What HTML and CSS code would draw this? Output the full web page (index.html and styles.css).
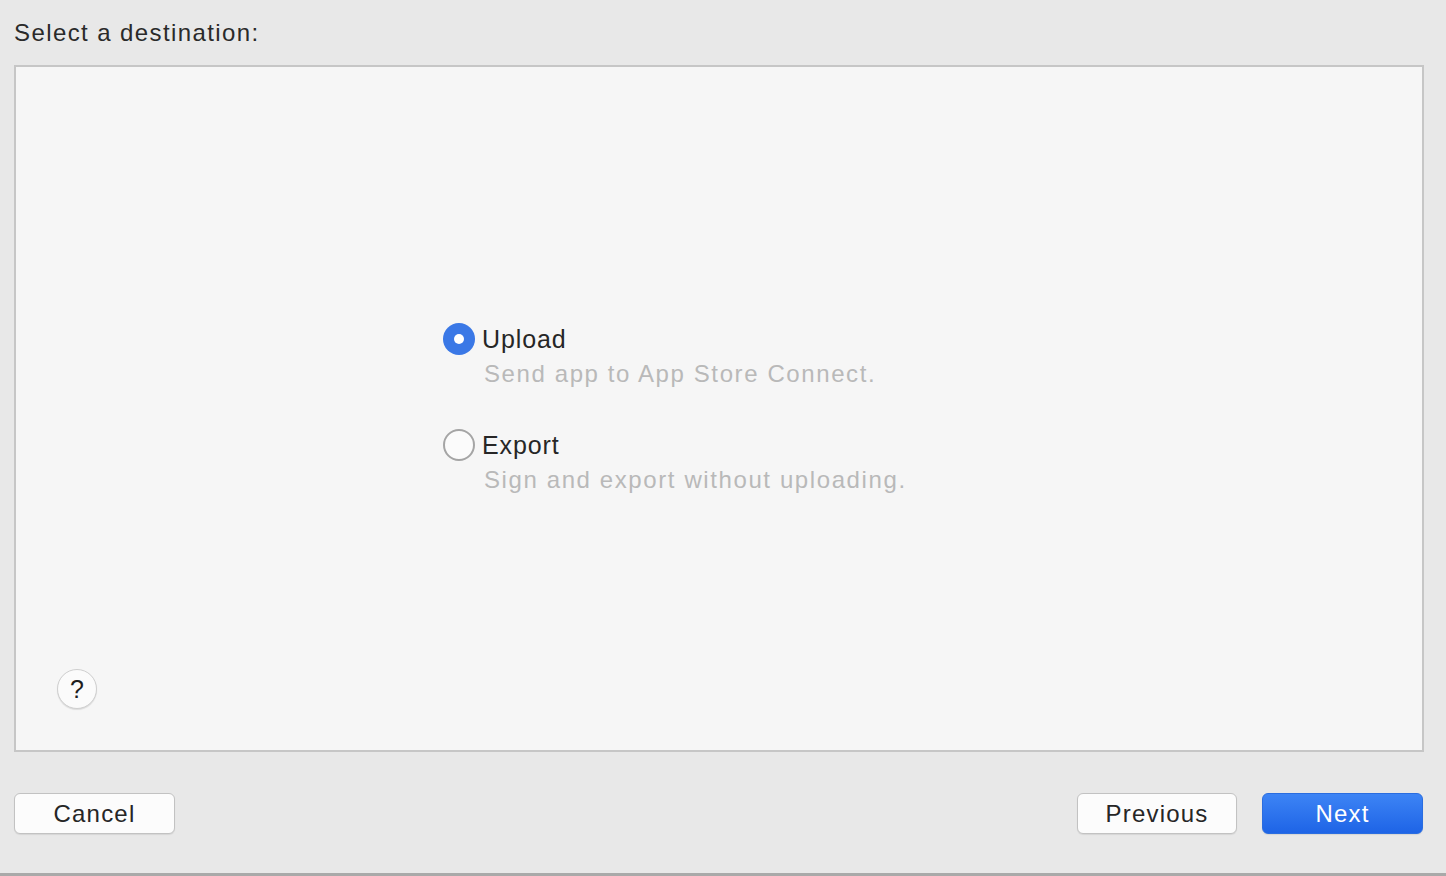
FILE: index.html
```html
<!DOCTYPE html>
<html>
<head>
<meta charset="utf-8">
<link rel="stylesheet" href="styles.css">
</head>
<body>
<div class="window">
  <div class="title">Select a destination:</div>
  <div class="panel">
    <div class="options">
      <div class="option">
        <div class="row">
          <span class="radio checked"><span class="dot"></span></span>
          <span class="label">Upload</span>
        </div>
        <div class="desc">Send app to App Store Connect.</div>
      </div>
      <div class="option">
        <div class="row">
          <span class="radio"></span>
          <span class="label">Export</span>
        </div>
        <div class="desc">Sign and export without uploading.</div>
      </div>
    </div>
    <div class="help">?</div>
  </div>
  <div class="footer">
    <button class="btn">Cancel</button>
    <div class="right">
      <button class="btn">Previous</button>
      <button class="btn primary">Next</button>
    </div>
  </div>
</div>
</body>
</html>
```
FILE: styles.css
```css
html, body {
  margin: 0;
  padding: 0;
}
body {
  width: 1446px;
  height: 876px;
  background: #e8e8e8;
  font-family: "Liberation Sans", Arial, sans-serif;
  color: #262626;
  overflow: hidden;
}
.window {
  display: flex;
  flex-direction: column;
  height: 873px;
  border-bottom: 3px solid #a9a9a9;
  box-sizing: content-box;
}
.title {
  padding: 19px 0 0 14px;
  height: 65px;
  box-sizing: border-box;
  font-size: 24px;
  line-height: 28px;
  letter-spacing: 1.4px;
  color: #2a2a2a;
}
.panel {
  margin: 0 22px 0 14px;
  height: 687px;
  box-sizing: border-box;
  border: 2px solid #c6c6c6;
  background: #f6f6f6;
  position: relative;
  display: flex;
  flex-direction: column;
  padding: 255px 0 0 427px;
}
.options {
  display: flex;
  flex-direction: column;
  gap: 36px;
}
.row {
  display: flex;
  align-items: center;
  gap: 7px;
  height: 34px;
}
.radio {
  width: 32px;
  height: 32px;
  border-radius: 50%;
  box-sizing: border-box;
  border: 2px solid #a5a5a5;
  background: #fbfbfb;
  display: flex;
  align-items: center;
  justify-content: center;
}
.radio.checked {
  border: none;
  background: #3a78e6;
}
.dot {
  width: 10px;
  height: 10px;
  border-radius: 50%;
  background: #fff;
}
.label {
  font-size: 25px;
  letter-spacing: 0.9px;
  color: #262626;
}
.desc {
  margin-left: 41px;
  font-size: 24px;
  color: #b9b9b9;
  line-height: 36px;
  letter-spacing: 1.6px;
}
.help {
  position: absolute;
  left: 41px;
  top: 602px;
  width: 40px;
  height: 40px;
  box-sizing: border-box;
  border-radius: 50%;
  border: 1.5px solid #cfcfcf;
  background: #fbfbfb;
  display: flex;
  align-items: center;
  justify-content: center;
  font-size: 25px;
  color: #1e1e1e;
  box-shadow: 0 1px 1px rgba(0,0,0,0.1);
}
.footer {
  display: flex;
  justify-content: space-between;
  padding: 41px 23px 0 14px;
}
.right {
  display: flex;
  gap: 25px;
}
.btn {
  width: 161px;
  height: 41px;
  border-radius: 6px;
  border: 1.5px solid #c2c2c2;
  background: #fcfcfc;
  font-family: "Liberation Sans", Arial, sans-serif;
  font-size: 24px;
  letter-spacing: 1.2px;
  color: #262626;
  padding: 0;
  box-shadow: 0 1px 1px rgba(0,0,0,0.08);
}
.right .btn {
  width: 160px;
}
.right .btn.primary {
  width: 161px;
}
.btn.primary {
  background: linear-gradient(#3d84f5, #1e64e6);
  border-color: #2a6de0;
  color: #fff;
}
```
